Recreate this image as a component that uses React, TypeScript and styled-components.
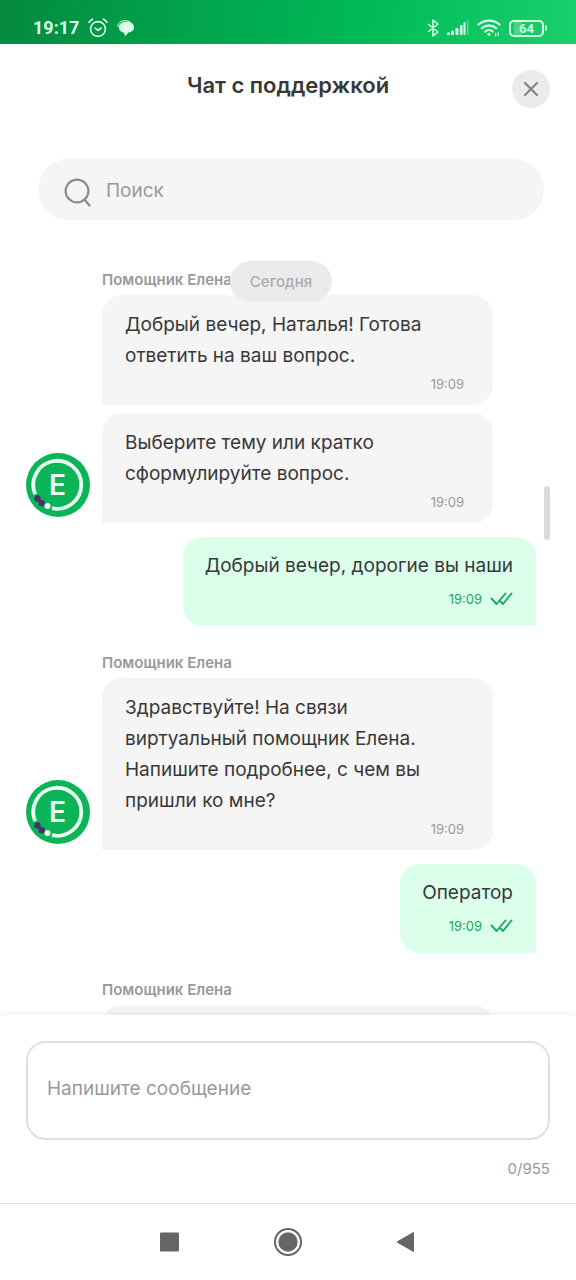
import React from "react";
import styled, { createGlobalStyle } from "styled-components";

const GlobalStyle = createGlobalStyle`
  *, *::before, *::after { box-sizing: border-box; }
  body {
    margin: 0;
    background: #fff;
    color: #383838;
    font-family: Inter, Roboto, "Liberation Sans", sans-serif;
  }
  button, input, textarea { font: inherit; }
`;

const Screen = styled.div`
  display: flex;
  flex-direction: column;
  height: 100vh;
  overflow: hidden;
  background: #fff;
`;

const StatusBar = styled.div`
  display: flex;
  flex: none;
  align-items: center;
  justify-content: space-between;
  height: 44px;
  padding: 12px 29px 0 33px;
  background: linear-gradient(100deg, #048a3f 0%, #00b956 62%, #1ad06c 100%);
  color: #d9ffe8;
`;

const StatusGroup = styled.div<{ $gap: number }>`
  display: flex;
  align-items: center;
  gap: ${(p) => p.$gap}px;
`;

const Clock = styled.span`
  font: 700 18px/24px Roboto, sans-serif;
`;

const Header = styled.header`
  display: grid;
  flex: none;
  grid-template-columns: 38px 1fr 38px;
  align-items: center;
  height: 90px;
  padding: 0 26px;
`;

const Title = styled.h1`
  grid-column: 2;
  margin: 0 0 8px;
  text-align: center;
  font-size: 22px;
  line-height: 28px;
  font-weight: 600;
`;

const CloseButton = styled.button`
  display: grid;
  place-items: center;
  width: 38px;
  height: 38px;
  padding: 0;
  border: 0;
  border-radius: 50%;
  background: #ebebeb;
  color: #858585;
`;

const SearchBox = styled.label`
  display: flex;
  flex: none;
  align-items: center;
  gap: 14px;
  height: 61px;
  margin: 25px 32px 0 38px;
  padding: 2px 26px 0;
  border-radius: 31px;
  background: #f5f5f5;
  color: #8c8c8c;
`;

const SearchInput = styled.input`
  flex: 1;
  min-width: 0;
  padding: 0;
  border: 0;
  outline: 0;
  background: transparent;
  font-size: 19px;
  line-height: 24px;
  &::placeholder { color: #999; opacity: 1; }
`;

const Chat = styled.main`
  position: relative;
  flex: 1;
  min-height: 0;
  overflow: hidden;
  padding: 49px 40px 0 26px;
`;

const DatePill = styled.div`
  position: absolute;
  top: 41px;
  left: calc(50% - 7px);
  transform: translateX(-50%);
  padding: 0 20px;
  border-radius: 21px;
  background: #ebebeb;
  color: #adadad;
  font-size: 15px;
  line-height: 41px;
  font-weight: 500;
`;

const ScrollThumb = styled.div`
  position: absolute;
  top: 266px;
  right: 26px;
  width: 6px;
  height: 54px;
  border-radius: 3px;
  background: #d9d9d9;
`;

const Sender = styled.div`
  padding-left: 76px;
  margin-bottom: 5px;
  color: #999;
  font-size: 15px;
  line-height: 21px;
  font-weight: 600;
`;

const Incoming = styled.div`
  display: flex;
  align-items: flex-end;
  gap: 12px;
  padding-right: 43px;
  margin-bottom: 14px;
`;

const AvatarSlot = styled.div`
  flex: none;
  width: 64px;
  height: 64px;
  margin-bottom: 6px;
`;

const Stack = styled.div`
  display: flex;
  flex: 1;
  flex-direction: column;
  gap: 8px;
`;

const Bubble = styled.article<{ $own?: boolean }>`
  padding: ${(p) => (p.$own ? "13px 23px 15px 22px" : "14px 29px 9px 23px")};
  border-radius: ${(p) => (p.$own ? "20px 20px 0 20px" : "20px 20px 20px 0")};
  background: ${(p) => (p.$own ? "#dcffeb" : "#f5f5f5")};
`;

const Message = styled.p`
  min-height: 31px;
  margin: 0;
  font-size: 19px;
  line-height: 31px;
`;

const Outgoing = styled.div`
  display: flex;
  justify-content: flex-end;
  margin-bottom: 26px;
`;

const Stamp = styled.div<{ $own?: boolean }>`
  display: flex;
  align-items: center;
  justify-content: flex-end;
  gap: 8px;
  min-height: 24px;
  margin-top: ${(p) => (p.$own ? 6 : 1)}px;
  color: ${(p) => (p.$own ? "#19aa5c" : "#999")};
  font-size: 13px;
  line-height: 24px;
`;

const Composer = styled.footer`
  position: relative;
  display: flex;
  flex: none;
  flex-direction: column;
  padding: 26px 26px 23px;
  background: #fff;
  box-shadow: 0 0 8px rgba(0, 0, 0, 0.09);
`;

const Field = styled.textarea`
  height: 99px;
  padding: 32px 19px;
  border: 2px solid #e0e0e0;
  border-radius: 20px;
  outline: 0;
  resize: none;
  background: #fff;
  font-size: 19px;
  line-height: 28px;
  &::placeholder { color: #999; opacity: 1; }
`;

const Counter = styled.div`
  margin-top: 18px;
  color: #999;
  text-align: right;
  font-size: 15px;
  line-height: 22px;
`;

const NavBar = styled.nav`
  position: relative;
  display: flex;
  flex: none;
  align-items: center;
  justify-content: center;
  gap: 88px;
  height: 77px;
  padding-right: 1px;
  border-top: 1px solid #dedede;
  background: #fff;
`;

const NavButton = styled.button`
  display: grid;
  place-items: center;
  width: 30px;
  height: 30px;
  padding: 0;
  border: 0;
  background: transparent;
  color: #666;
`;

const AlarmIcon = () => (
  <svg width="20" height="20" viewBox="0 0 20 20" fill="none" stroke="currentColor" strokeWidth="1.6" strokeLinecap="round">
    <circle cx="10" cy="11" r="7.4" />
    <path d="M1 4.4C1.8 3 3 1.9 4.6 1.2M19 4.4C18.2 3 17 1.9 15.4 1.2M7 10l3 2.4L13.2 10" />
  </svg>
);

const ChatIcon = () => (
  <svg width="18" height="17" viewBox="0 0 18 17">
    <path d="M1 7C.4 3 3.5.7 8 .7c2 0 4 .4 5.400 1.300" fill="none" stroke="currentColor" strokeWidth="1" />
    <path d="M9.500 1.800C14 1.800 17 4 17 7.300S14.500 12.300 11.500 12.500L8 16.300 7 12.700C3.800 12 1.800 10.200 1.800 7.300 1.800 4 5 1.800 9.500 1.800Z" fill="currentColor" />
  </svg>
);

const BluetoothIcon = () => (
  <svg width="12" height="18" viewBox="0 0 12 18" fill="none" stroke="currentColor" strokeWidth="1.600" strokeLinejoin="round">
    <path d="M1 5l10 8-5 4V1l5 4L1 13" />
  </svg>
);

const SignalIcon = () => (
  <svg width="22" height="16" viewBox="0 0 22 16" fill="currentColor">
    <rect x="0" y="12.500" width="3" height="2.500" rx="1" />
    <rect x="4" y="10.500" width="3" height="4.500" rx="1" />
    <rect x="8.500" y="8" width="3" height="7" rx="1" />
    <rect x="13" y="5" width="2.500" height="10" rx="1" />
    <rect x="16.500" y="2" width="2" height="13" rx="1" />
    <rect x="20" y="0" width="1.500" height="15" rx="0.700" opacity="0.350" />
  </svg>
);

const WifiIcon = () => (
  <svg width="24" height="18" viewBox="0 0 24 18" fill="none" stroke="currentColor" strokeWidth="2.300" strokeLinecap="round">
    <path d="M1.500 5.500C7.500.2 16.500.2 22.500 5.500M5 9.200c4-3.600 10-3.600 14 0M8.400 12.500c2.200-2 5-2 7.200 0" />
    <circle cx="12" cy="15.300" r="1.600" fill="currentColor" stroke="none" />
    <path d="M18.700 17v-3M21.300 13.500v3" strokeWidth="1.200" />
  </svg>
);

const BatteryBody = styled.span`
  display: inline-flex;
  align-items: center;
  justify-content: center;
  width: 35px;
  height: 17px;
  border: 2px solid currentColor;
  border-radius: 5px;
  background: linear-gradient(90deg, transparent 3px, #48d685 3px, #48d685 10px, transparent 10px);
  font: 700 13px/13px Roboto, sans-serif;
`;

const BatteryTip = styled.span`
  width: 2px;
  height: 6px;
  border-radius: 0 2px 2px 0;
  background: currentColor;
`;

const SearchIcon = () => (
  <svg width="28" height="32" viewBox="0 0 28 32" fill="none" stroke="currentColor" strokeWidth="2.200" strokeLinecap="round">
    <circle cx="13" cy="16" r="11.400" />
    <path d="M20.500 24.500l5 6" />
  </svg>
);

const ReadIcon = () => (
  <svg width="23" height="14" viewBox="0 0 23 14" fill="none" stroke="currentColor" strokeWidth="1.900" strokeLinecap="round" strokeLinejoin="round">
    <path d="M1.500 6.500l5 5.500L15.500 1.500M10.500 9.500l2.500 2.500L21.500 1.500" />
  </svg>
);

const AvatarLetter = styled.text`
  font: 600 28px Inter, sans-serif;
`;

const Avatar = () => (
  <AvatarSlot>
    <svg width="64" height="64" viewBox="0 0 64 64" role="img" aria-label="Елена">
      <circle cx="32" cy="32" r="32" fill="#0bb557" />
      <path d="M9.200 41.200A24 24 0 1 1 26 55.200" fill="none" stroke="#e8fff2" strokeWidth="3.800" />
      <circle cx="11.500" cy="45.500" r="3.200" fill="#4f2d6b" />
      <circle cx="15.700" cy="50.300" r="3.200" fill="#4f2d6b" />
      <circle cx="21.500" cy="53" r="3" fill="#e8fff2" />
      <AvatarLetter x="31.500" y="42" textAnchor="middle" fill="#e8fff2">Е</AvatarLetter>
    </svg>
  </AvatarSlot>
);

const SENDER = "Помощник Елена";

type BubbleProps = { text?: string; time?: string };

const HelperBubble = ({ text, time }: BubbleProps) => (
  <Bubble>
    <Message>{text}</Message>
    <Stamp>{time && <time>{time}</time>}</Stamp>
  </Bubble>
);

const OwnMessage = ({ text, time }: BubbleProps) => (
  <Outgoing>
    <Bubble $own>
      <Message>{text}</Message>
      <Stamp $own><time>{time}</time><ReadIcon /></Stamp>
    </Bubble>
  </Outgoing>
);

const HelperGroup = ({ texts }: { texts: string[] }) => (
  <section>
    <Sender>{SENDER}</Sender>
    <Incoming>
      <Avatar />
      <Stack>
        {texts.map((text) => <HelperBubble key={text} text={text} time="19:09" />)}
      </Stack>
    </Incoming>
  </section>
);

export default function App() {
  return (
    <>
      <GlobalStyle />
      <Screen>
        <StatusBar>
          <StatusGroup $gap={9}>
            <Clock>19:17</Clock>
            <AlarmIcon />
            <ChatIcon />
          </StatusGroup>
          <StatusGroup $gap={8}>
            <BluetoothIcon />
            <SignalIcon />
            <WifiIcon />
            <StatusGroup $gap={1}>
              <BatteryBody>64</BatteryBody>
              <BatteryTip />
            </StatusGroup>
          </StatusGroup>
        </StatusBar>

        <Header>
          <Title>Чат с поддержкой</Title>
          <CloseButton type="button" aria-label="Закрыть">
            <svg width="16" height="16" viewBox="0 0 16 16" fill="none" stroke="currentColor" strokeWidth="2.200" strokeLinecap="round">
              <path d="M2 2l12 12M14 2L2 14" />
            </svg>
          </CloseButton>
        </Header>

        <SearchBox>
          <SearchIcon />
          <SearchInput type="text" placeholder="Поиск" aria-label="Поиск" />
        </SearchBox>

        <Chat>
          <HelperGroup
            texts={[
              "Добрый вечер, Наталья! Готова ответить на ваш вопрос.",
              "Выберите тему или кратко сформулируйте вопрос.",
            ]}
          />
          <OwnMessage text="Добрый вечер, дорогие вы наши" time="19:09" />
          <HelperGroup
            texts={["Здравствуйте! На связи виртуальный помощник Елена. Напишите подробнее, с чем вы пришли ко мне?"]}
          />
          <OwnMessage text="Оператор" time="19:09" />
          <Sender>{SENDER}</Sender>
          <Incoming>
            <AvatarSlot />
            <Stack>
              <HelperBubble />
            </Stack>
          </Incoming>
          <DatePill>Сегодня</DatePill>
          <ScrollThumb />
        </Chat>

        <Composer>
          <Field placeholder="Напишите сообщение" aria-label="Напишите сообщение" maxLength={955} />
          <Counter>0/955</Counter>
        </Composer>

        <NavBar>
          <NavButton type="button" aria-label="Недавние">
            <svg width="20" height="20" viewBox="0 0 20 20"><rect x="0" y="0.500" width="19" height="19" rx="1" fill="currentColor" /></svg>
          </NavButton>
          <NavButton type="button" aria-label="Домой">
            <svg width="30" height="30" viewBox="0 0 30 30">
              <circle cx="15" cy="15" r="13" fill="none" stroke="currentColor" strokeWidth="2" />
              <circle cx="15" cy="15" r="9.700" fill="currentColor" />
            </svg>
          </NavButton>
          <NavButton type="button" aria-label="Назад">
            <svg width="20" height="22" viewBox="0 0 20 22"><path d="M17.500 1.500v19L1 11Z" fill="currentColor" stroke="currentColor" strokeLinejoin="round" /></svg>
          </NavButton>
        </NavBar>
      </Screen>
    </>
  );
}
